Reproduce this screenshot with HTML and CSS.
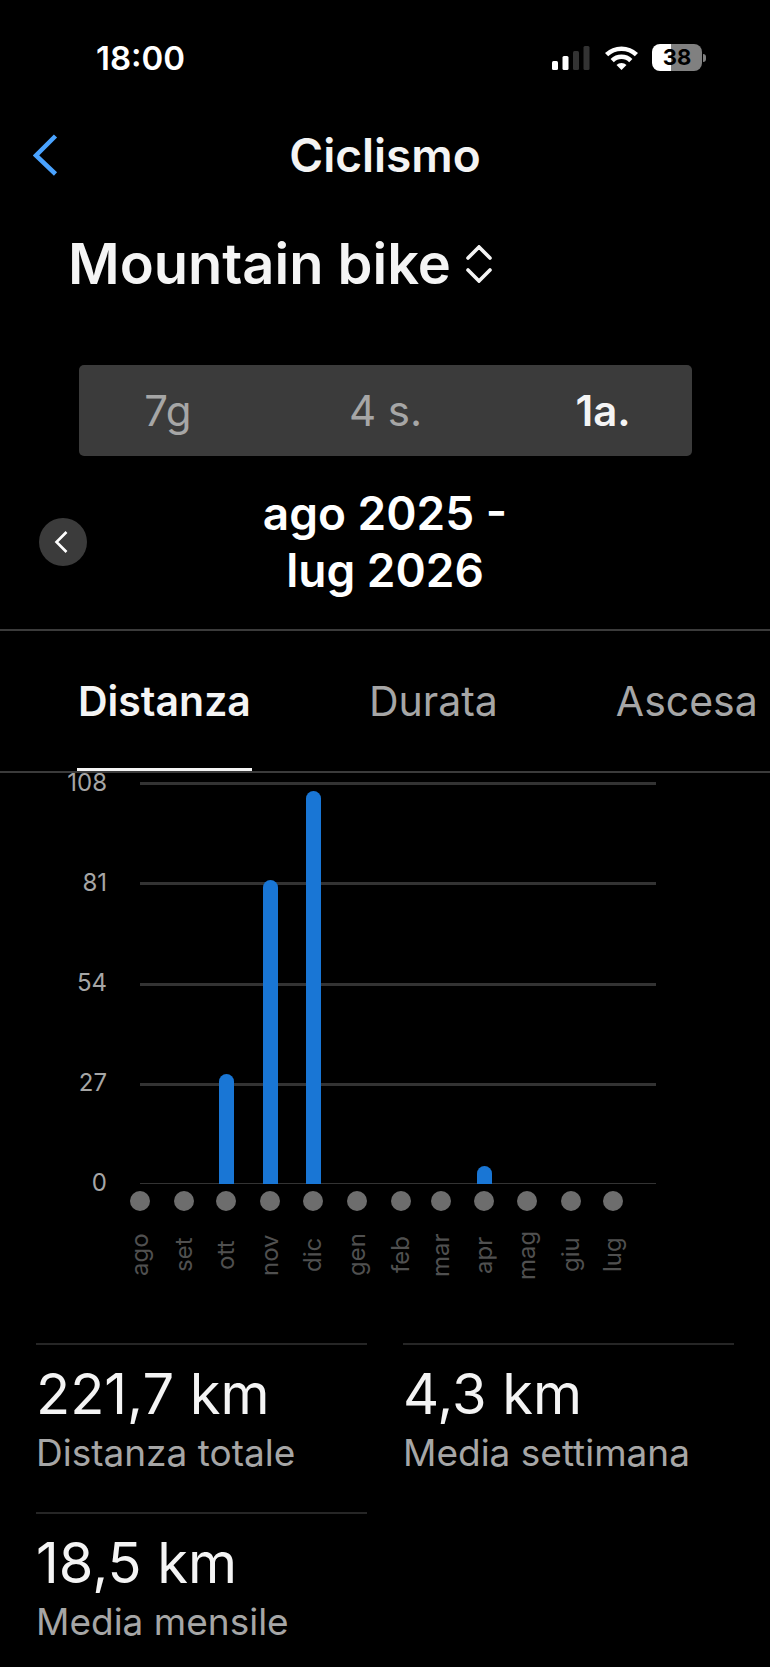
FILE: index.html
```html
<!DOCTYPE html>
<html lang="it">
<head>
<meta charset="utf-8">
<meta name="viewport" content="width=device-width, initial-scale=1">
<title>Ciclismo</title>
<link rel="stylesheet" href="styles.css">
</head>
<body>
<div class="status">
  <time class="status-time">18:00</time>
  <div class="status-icons">
    <svg class="signal" viewBox="0 0 38 24" width="38" height="24" aria-hidden="true">
      <rect x="0" y="15" width="6" height="9" rx="1.500" fill="#fff"/>
      <rect x="10.500" y="10" width="6" height="14" rx="1.500" fill="#fff"/>
      <rect x="21" y="5" width="6" height="19" rx="1.500" fill="#333"/>
      <rect x="31.500" y="0" width="6" height="24" rx="1.500" fill="#333"/>
    </svg>
    <svg class="wifi" viewBox="0 0 33 24" width="33" height="24" aria-hidden="true">
      <g fill="none" stroke="#fff" stroke-width="4.600">
        <path d="M1.600 8.700A21.500 21.500 0 0 1 31.400 8.700"/>
        <path d="M7.200 14.600A13.300 13.300 0 0 1 25.800 14.600"/>
      </g>
      <path d="M16.500 24L11.500 19.100A7 7 0 0 1 21.500 19.100Z" fill="#fff"/>
    </svg>
    <div class="battery"><span class="battery-body">38</span><span class="battery-tip"></span></div>
  </div>
</div>

<header class="header">
  <button class="back" type="button" aria-label="Indietro">
    <svg viewBox="0 0 25 42" width="25" height="42" aria-hidden="true"><path d="M22.500 2L3 21.500L22.500 40" fill="none" stroke="#4aa3ff" stroke-width="4.500"/></svg>
  </button>
  <h1 class="title">Ciclismo</h1>
</header>

<main>
  <div class="sport">
    <select class="sport-select" aria-label="Sport"><option>Mountain bike</option></select>
    <svg viewBox="0 0 26 38" width="26" height="38" aria-hidden="true"><path d="M2 13L13 2L24 13M2 25L13 36L24 25" fill="none" stroke="#f4f4f4" stroke-width="3.600" stroke-linecap="round"/></svg>
  </div>

  <div class="segments">
    <button class="segment" type="button">7g</button>
    <button class="segment" type="button">4 s.</button>
    <button class="segment segment-active" type="button" aria-pressed="true">1a.</button>
  </div>

  <div class="period">
    <button class="previous" type="button" aria-label="Periodo precedente">
      <svg viewBox="0 0 14 24" width="14" height="24" aria-hidden="true"><path d="M12.500 2L2.500 12L12.500 22" fill="none" stroke="#fff" stroke-width="2.600"/></svg>
    </button>
    <h2 class="period-label">ago 2025 -<br>lug 2026</h2>
  </div>

  <nav class="tabs">
    <button class="tab tab-active" type="button">Distanza</button>
    <button class="tab" type="button">Durata</button>
    <button class="tab" type="button">Ascesa</button>
  </nav>

  <section class="chart" aria-label="Distanza mensile">
    <div class="scale"><span>108</span><span>81</span><span>54</span><span>27</span><span>0</span></div>
    <div class="plot">
      <div class="lines"><i></i><i></i><i></i><i></i><i class="baseline"></i></div>
      <div class="months bars">
        <b style="height:0"></b><b style="height:0"></b><b style="height:27.4%"></b><b style="height:75.6%"></b><b style="height:97.8%"></b><b style="height:0"></b><b style="height:0"></b><b style="height:0"></b><b style="height:4.4%"></b><b style="height:0"></b><b style="height:0"></b><b style="height:0"></b>
      </div>
    </div>
    <div class="months ticks">
      <div class="month"><span>ago</span></div>
      <div class="month"><span>set</span></div>
      <div class="month"><span>ott</span></div>
      <div class="month"><span>nov</span></div>
      <div class="month"><span>dic</span></div>
      <div class="month"><span>gen</span></div>
      <div class="month"><span>feb</span></div>
      <div class="month"><span>mar</span></div>
      <div class="month"><span>apr</span></div>
      <div class="month"><span>mag</span></div>
      <div class="month"><span>giu</span></div>
      <div class="month"><span>lug</span></div>
    </div>
  </section>

  <dl class="stats">
    <div class="stat"><dd class="value">221,7 km</dd><dt class="caption">Distanza totale</dt></div>
    <div class="stat"><dd class="value">4,3 km</dd><dt class="caption">Media settimana</dt></div>
    <div class="stat"><dd class="value">18,5 km</dd><dt class="caption">Media mensile</dt></div>
  </dl>
</main>
</body>
</html>
```

FILE: styles.css
```css
* {
  box-sizing: border-box;
}

body {
  margin: 0;
  background: #000;
  color: #f4f4f4;
  font-family: Inter, "Liberation Sans", sans-serif;
  overflow-x: hidden;
}

button,
select {
  margin: 0;
  padding: 0;
  border: 0;
  background: none;
  color: inherit;
  font: inherit;
  appearance: none;
}

svg {
  display: block;
  flex: none;
}

/* Status bar */
.status {
  display: flex;
  align-items: center;
  justify-content: space-between;
  height: 115px;
  padding: 0 64px 0 96px;
  color: #fff;
}

.status-time {
  font-size: 33px;
  font-weight: 600;
}

.status-icons {
  display: flex;
  align-items: center;
}

.signal {
  margin-right: 15px;
}

.wifi {
  margin-right: 14px;
}

.battery {
  display: flex;
  align-items: center;
  gap: 1px;
}

.battery-body {
  width: 50px;
  border-radius: 8px;
  background: linear-gradient(90deg, #fff 38%, #808080 38%);
  color: #000;
  font-size: 22px;
  font-weight: 700;
  line-height: 27px;
  text-align: center;
}

.battery-tip {
  width: 3px;
  height: 8px;
  border-radius: 0 4px 4px 0;
  background: #808080;
}

/* Header */
.header {
  display: grid;
  grid-template-columns: 96px 1fr 96px;
  align-items: center;
  height: 80px;
}

.back {
  padding: 0 33px;
}

.title {
  margin: 0;
  font-size: 46px;
  font-weight: 600;
  text-align: center;
}

.sport {
  display: flex;
  align-items: center;
  gap: 15px;
  height: 137px;
  padding-left: 68px;
}

.sport-select {
  font-size: 56px;
  font-weight: 600;
  line-height: 72px;
}

.segments {
  display: flex;
  justify-content: space-between;
  margin: 33px 78px 0 79px;
  border-radius: 5px;
  background: #3b3b3b;
}

.segment {
  flex: 0 0 29%;
  color: #a6a6a6;
  font-size: 42px;
  line-height: 91px;
}

.segment-active {
  color: #f4f4f4;
  font-weight: 600;
}

.period {
  display: grid;
  grid-template-columns: 96px 1fr 96px;
  align-items: center;
  padding: 29px 0 30px;
  border-bottom: 2px solid #3b3b3b;
}

.previous {
  display: flex;
  align-items: center;
  justify-content: center;
  width: 48px;
  height: 48px;
  margin-left: 39px;
  padding-right: 4px;
  border-radius: 50%;
  background: #3b3b3b;
}

.period-label {
  margin: 0;
  color: #fff;
  font-size: 46px;
  font-weight: 600;
  line-height: 57px;
  text-align: center;
}

/* Metric tabs */
.tabs {
  display: flex;
  gap: 116px;
  padding-left: 77px;
  border-bottom: 2px solid #3b3b3b;
}

.tab {
  padding: 3px 1px 0;
  border-bottom: 3px solid transparent;
  color: #a6a6a6;
  font-size: 41px;
  line-height: 134px;
}

.tab-active {
  border-color: #f4f4f4;
  color: #f4f4f4;
  font-weight: 600;
}

/* Monthly chart */
.chart {
  display: grid;
  grid-template-columns: 107px 1fr;
  column-gap: 33px;
  padding: 9px 114px 0 0;
}

.scale {
  display: flex;
  flex-direction: column;
  justify-content: space-between;
  margin: -11px 0;
  color: #a6a6a6;
  font-size: 24px;
  line-height: 24px;
  text-align: right;
}

.plot {
  display: grid;
  height: 402px;
}

.lines,
.bars {
  grid-area: 1 / 1;
}

.lines {
  display: flex;
  flex-direction: column;
  justify-content: space-between;
}

.lines i {
  height: 3px;
  background: #333;
}

.lines .baseline {
  height: 1px;
}

/* One column per month, as wide as its number of days */
.months {
  display: grid;
  grid-template-columns: 31fr 30fr 31fr 30fr 31fr 31fr 28fr 31fr 30fr 31fr 30fr 30fr;
}

.bars {
  align-items: end;
}

.bars b {
  width: 15px;
  margin-left: -7px;
  border-radius: 8px 8px 0 0;
  background: #1976d5;
}

.ticks {
  grid-column: 2;
  padding-top: 7px;
}

.month {
  display: flex;
  flex-direction: column;
  align-items: center;
  gap: 4px;
  width: 30px;
  margin-left: -15px;
}

.month::before {
  content: "";
  width: 20px;
  height: 20px;
  border-radius: 50%;
  background: #6d6d6d;
}

.month span {
  height: 80px;
  color: #505050;
  font-size: 24px;
  line-height: 30px;
  text-align: center;
  writing-mode: vertical-rl;
  transform: rotate(180deg);
}

/* Totals */
.stats {
  display: grid;
  grid-template-columns: 1fr 1fr;
  column-gap: 36px;
  margin: 48px 0 0;
  padding: 0 36px;
}

.stat {
  display: flex;
  flex-direction: column;
  height: 169px;
  padding-top: 14px;
  border-top: 2px solid #262626;
}

.stat:last-child {
  height: 155px;
}

.value {
  margin: 0;
  font-size: 56px;
  line-height: 70px;
}

.caption {
  color: #a6a6a6;
  font-size: 37px;
  line-height: 48px;
}
```
